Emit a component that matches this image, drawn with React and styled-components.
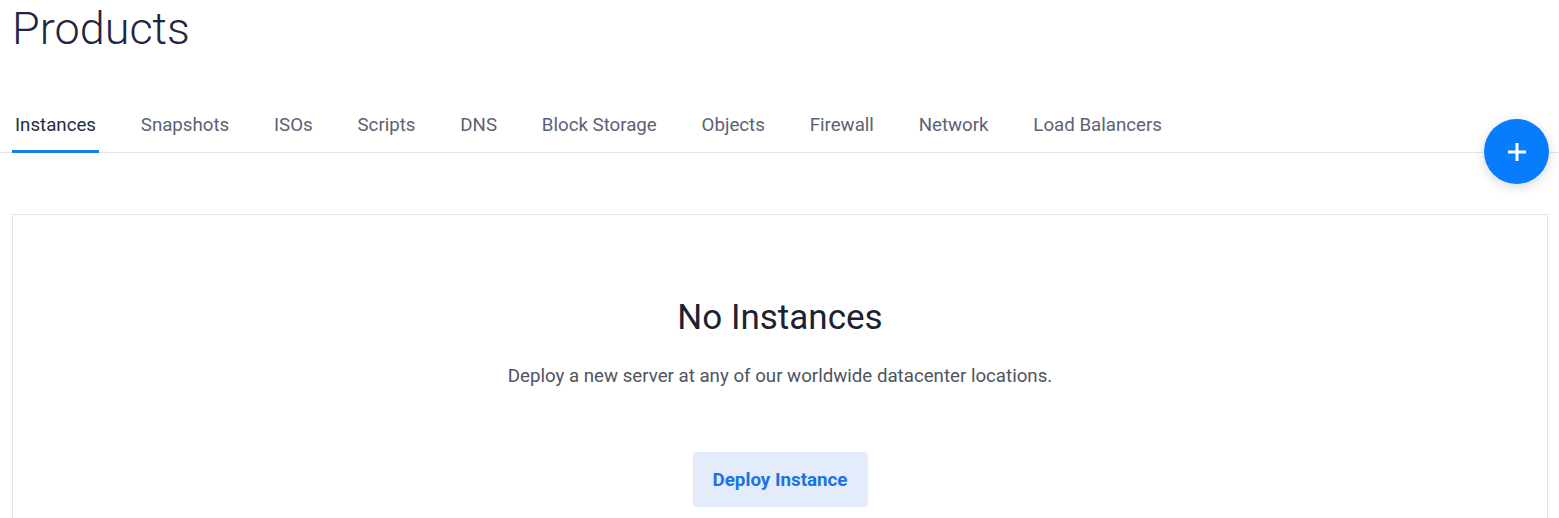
import React, { useState } from "react";
import styled, { createGlobalStyle } from "styled-components";

const GlobalStyle = createGlobalStyle`
  html, body {
    margin: 0;
    padding: 0;
    background: #ffffff;
  }
  body {
    font-family: Roboto, "Liberation Sans", Arial, sans-serif;
    color: #222a40;
  }
`;

const Page = styled.div`
  position: relative;
  min-height: 518px;
  overflow: hidden;
`;

const Header = styled.header`
  padding: 2px 12px 0;
`;

const Title = styled.h1`
  margin: 0;
  font-size: 45px;
  line-height: 54px;
  font-weight: 300;
  color: #1f2643;
`;

const TabBar = styled.nav`
  display: flex;
  gap: 38.8px;
  margin-top: 58px;
  padding: 0 12px;
  border-bottom: 1px solid #e5e6e8;
`;

const Tab = styled.a`
  display: block;
  padding: 0 3px 14px;
  margin-bottom: -1px;
  font-size: 18.7px;
  line-height: 22px;
  color: ${props => (props.active ? "#262c45" : "#5c6274")};
  border-bottom: 3px solid ${props => (props.active ? "#1a7ae6" : "transparent")};
  cursor: pointer;
  white-space: nowrap;
`;

const Fab = styled.button`
  position: absolute;
  top: 119px;
  right: 10px;
  width: 65px;
  height: 65px;
  border: none;
  border-radius: 50%;
  background: #077cfc;
  box-shadow: 0 3px 12px rgba(0, 0, 0, 0.16);
  display: flex;
  align-items: center;
  justify-content: center;
  cursor: pointer;
  padding: 0;
`;

const Content = styled.main`
  padding: 61px 11px 0 12px;
`;

const Card = styled.section`
  border: 1px solid #e3e4e6;
  padding: 82px 20px 40px;
  display: flex;
  flex-direction: column;
  align-items: center;
`;

const EmptyTitle = styled.h2`
  margin: 0;
  font-size: 35px;
  line-height: 42px;
  font-weight: 400;
  color: #1d2132;
`;

const EmptyText = styled.p`
  margin: 25px 0 0;
  font-size: 18.7px;
  line-height: 24px;
  color: #4f5461;
`;

const PrimaryButton = styled.button`
  margin-top: 64px;
  height: 55px;
  padding: 0 20px;
  border: none;
  border-radius: 4px;
  background: #e4ecfb;
  color: #1a72e8;
  font-family: inherit;
  font-size: 18.8px;
  font-weight: 700;
  cursor: pointer;
`;

const tabs = [
  "Instances",
  "Snapshots",
  "ISOs",
  "Scripts",
  "DNS",
  "Block Storage",
  "Objects",
  "Firewall",
  "Network",
  "Load Balancers",
];

const PlusIcon = () => (
  <svg width="18" height="18" viewBox="0 0 18 18" aria-hidden="true">
    <path d="M9 0v18M0 9h18" stroke="#ffffff" strokeWidth="3" />
  </svg>
);

const App = () => {
  const [active, setActive] = useState("Instances");

  return (
    <Page>
      <GlobalStyle />
      <Header>
        <Title>Products</Title>
      </Header>
      <TabBar>
        {tabs.map(tab => (
          <Tab key={tab} active={tab === active ? 1 : 0} onClick={() => setActive(tab)}>
            {tab}
          </Tab>
        ))}
      </TabBar>
      <Fab aria-label="Add">
        <PlusIcon />
      </Fab>
      <Content>
        <Card>
          <EmptyTitle>No Instances</EmptyTitle>
          <EmptyText>Deploy a new server at any of our worldwide datacenter locations.</EmptyText>
          <PrimaryButton>Deploy Instance</PrimaryButton>
        </Card>
      </Content>
    </Page>
  );
};

export default App;
